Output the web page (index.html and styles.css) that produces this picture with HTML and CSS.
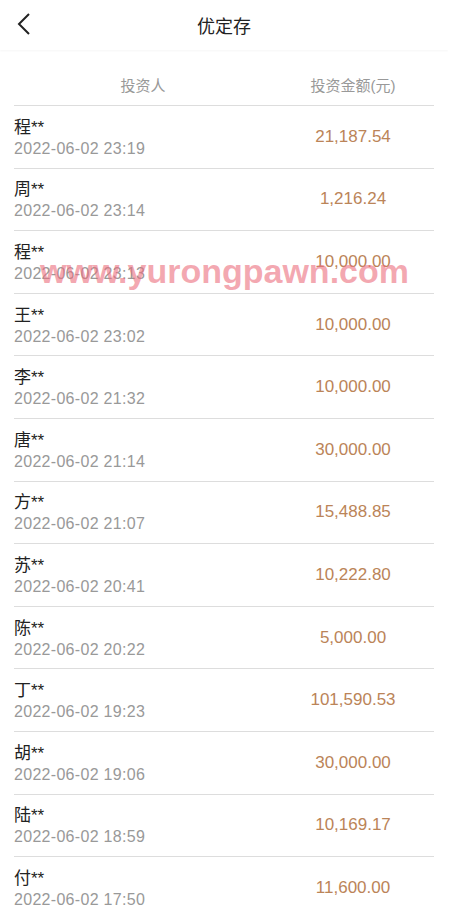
FILE: index.html
```html
<!DOCTYPE html>
<html lang="zh-CN">
<head>
  <meta charset="UTF-8">
  <title>优定存</title>
  <link rel="stylesheet" href="styles.css">
</head>
<body>
<div id="page">
  <!-- 顶部导航 -->
  <div class="nav">
    <span class="back">
      <svg width="14" height="22" viewBox="0 0 14 22"><polyline points="12,1 2,11 12,21" fill="none" stroke="#222" stroke-width="2"/></svg>
    </span>
    <span class="title">优定存</span>
  </div>

  <div class="list">
    <div class="thead">
      <div class="col-name">投资人</div>
      <div class="col-amount">投资金额(元)</div>
    </div>

    <div class="row"><div class="col-name"><p class="name">程**</p><p class="time">2022-06-02 23:19</p></div><div class="col-amount">21,187.54</div></div>
    <div class="row"><div class="col-name"><p class="name">周**</p><p class="time">2022-06-02 23:14</p></div><div class="col-amount">1,216.24</div></div>
    <div class="row"><div class="col-name"><p class="name">程**</p><p class="time">2022-06-02 23:13</p></div><div class="col-amount">10,000.00</div></div>
    <div class="row"><div class="col-name"><p class="name">王**</p><p class="time">2022-06-02 23:02</p></div><div class="col-amount">10,000.00</div></div>
    <div class="row"><div class="col-name"><p class="name">李**</p><p class="time">2022-06-02 21:32</p></div><div class="col-amount">10,000.00</div></div>
    <div class="row"><div class="col-name"><p class="name">唐**</p><p class="time">2022-06-02 21:14</p></div><div class="col-amount">30,000.00</div></div>
    <div class="row"><div class="col-name"><p class="name">方**</p><p class="time">2022-06-02 21:07</p></div><div class="col-amount">15,488.85</div></div>
    <div class="row"><div class="col-name"><p class="name">苏**</p><p class="time">2022-06-02 20:41</p></div><div class="col-amount">10,222.80</div></div>
    <div class="row"><div class="col-name"><p class="name">陈**</p><p class="time">2022-06-02 20:22</p></div><div class="col-amount">5,000.00</div></div>
    <div class="row"><div class="col-name"><p class="name">丁**</p><p class="time">2022-06-02 19:23</p></div><div class="col-amount">101,590.53</div></div>
    <div class="row"><div class="col-name"><p class="name">胡**</p><p class="time">2022-06-02 19:06</p></div><div class="col-amount">30,000.00</div></div>
    <div class="row"><div class="col-name"><p class="name">陆**</p><p class="time">2022-06-02 18:59</p></div><div class="col-amount">10,169.17</div></div>
    <div class="row"><div class="col-name"><p class="name">付**</p><p class="time">2022-06-02 17:50</p></div><div class="col-amount">11,600.00</div></div>
  </div>

  <!-- 水印 -->
  <div class="watermark">www.yurongpawn.com</div>
</div>
</body>
</html>
```

FILE: styles.css
```css
body{
  margin: 0;
  padding: 0;
  background-color: #fff;
  font-family: "Liberation Sans", "Noto Sans CJK SC", sans-serif;
  overflow: hidden;
}
#page{
  position: relative;
  width: 448px;
  height: 918px;
  overflow: hidden;
}
.nav{
  height: 50px;
  display: flex;
  align-items: center;
  justify-content: center;
  box-shadow: 0 1px 2px rgba(0, 0, 0, 0.04);
}
.back{
  position: absolute;       /*  返回箭头贴在左侧  */
  left: 17px;
  top: 13px;
  display: flex;
}
.title{
  font-size: 18px;
  color: #222;
}
.list{
  margin: 16px 14px 0 14px;
}
.thead, .row{
  display: grid;
  grid-template-columns: 258px 162px;
  border-bottom: 1px solid #ddd;
}
.thead{
  height: 39px;
  line-height: 39px;
  font-size: 15px;
  color: #999;
}
.thead .col-name, .thead .col-amount{
  text-align: center;
}
.row{
  height: 61.6px;
  align-items: center;
}
.row .col-name{
  padding-top: 2px;
}
.name{
  margin: 0;
  font-size: 17px;
  line-height: 22px;
  color: #222;
}
.time{
  margin: 0;
  font-size: 16px;
  line-height: 20px;
  color: #999;
  letter-spacing: 0.3px;
}
.row .col-amount{
  text-align: center;
  font-size: 17px;
  color: #bb8458;
}
.watermark{
  position: absolute;       /*  水印覆盖在列表之上  */
  left: 40px;
  top: 254px;
  font-size: 34px;
  line-height: 1;
  font-weight: bold;
  color: rgba(236, 110, 125, 0.6);
  white-space: nowrap;
}
```
